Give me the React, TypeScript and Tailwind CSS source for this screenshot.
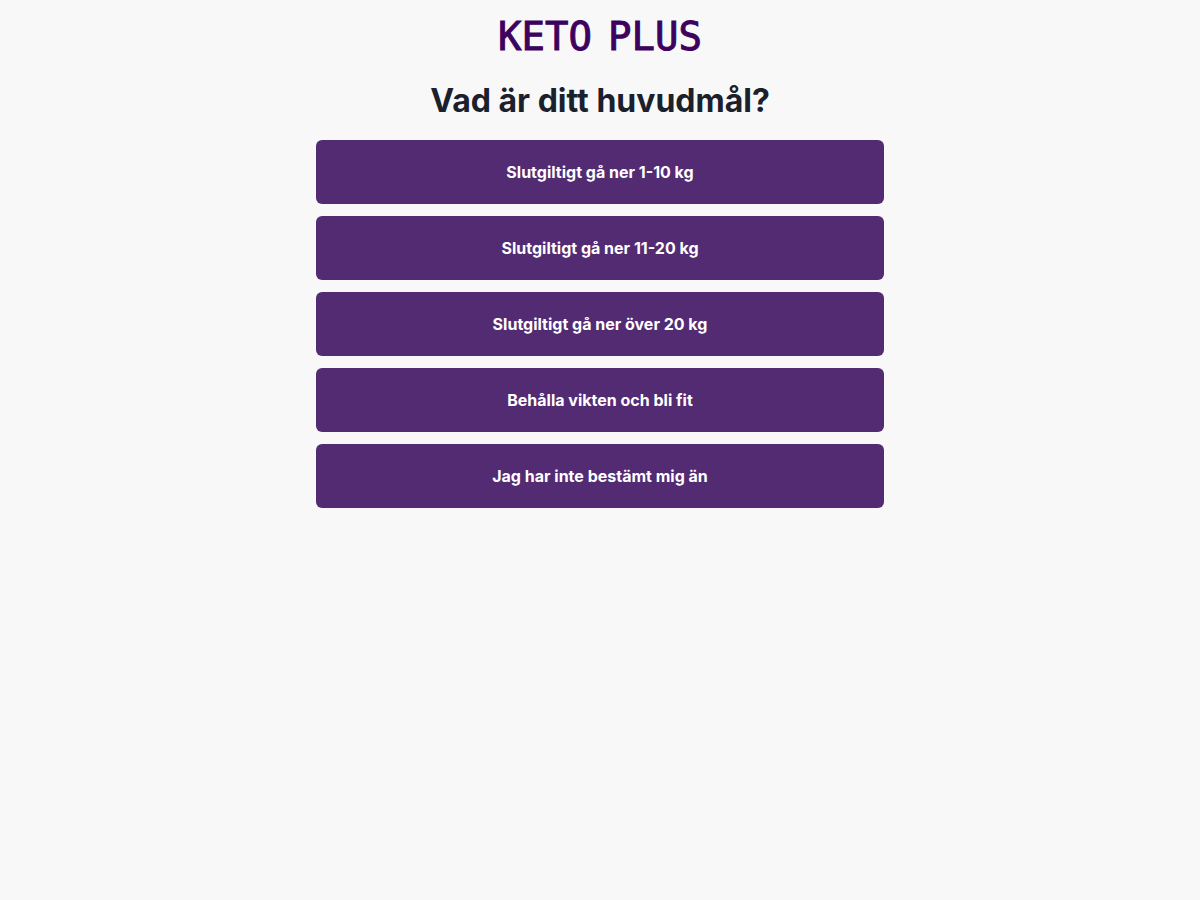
const goals: string[] = [
  'Slutgiltigt gå ner 1-10 kg',
  'Slutgiltigt gå ner 11-20 kg',
  'Slutgiltigt gå ner över 20 kg',
  'Behålla vikten och bli fit',
  'Jag har inte bestämt mig än',
];

function Logo() {
  return (
    <div className="flex justify-center gap-4 font-['DejaVu_Sans_Mono',monospace] text-[39px] leading-[50px] text-[#3d0260] [-webkit-text-stroke:1px_#3d0260]">
      <span>KETO</span>
      <span>PLUS</span>
    </div>
  );
}

export default function App() {
  return (
    <div className="min-h-screen bg-[#f8f8f8] font-['Inter',sans-serif]">
      <header className="px-4 pt-3">
        <Logo />
      </header>
      <main className="mx-auto flex max-w-[600px] flex-col px-4 pt-4">
        <h1 className="text-center text-[32px] leading-[46px] font-bold text-[#1a202c]">
          Vad är ditt huvudmål?
        </h1>
        <div className="mt-4 flex flex-col gap-3">
          {goals.map((goal) => (
            <button
              key={goal}
              type="button"
              className="h-16 w-full cursor-pointer rounded-md bg-[#532b73] px-6 text-base font-bold text-white hover:bg-[#3d0260]"
            >
              {goal}
            </button>
          ))}
        </div>
      </main>
    </div>
  );
}
